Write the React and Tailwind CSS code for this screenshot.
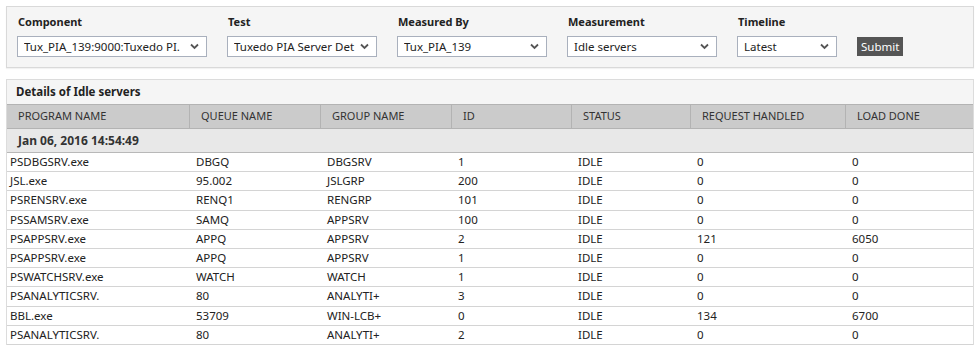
import React from "react";

const filters = [
  { label: "Component", value: "Tux_PIA_139:9000:Tuxedo PI.", width: "w-[190px]" },
  { label: "Test", value: "Tuxedo PIA Server Det", width: "w-[150px]" },
  { label: "Measured By", value: "Tux_PIA_139", width: "w-[150px]" },
  { label: "Measurement", value: "Idle servers", width: "w-[150px]" },
  { label: "Timeline", value: "Latest", width: "w-[100px]" },
];

const columns = [
  "PROGRAM NAME",
  "QUEUE NAME",
  "GROUP NAME",
  "ID",
  "STATUS",
  "REQUEST HANDLED",
  "LOAD DONE",
];

const rows = [
  ["PSDBGSRV.exe", "DBGQ", "DBGSRV", "1", "IDLE", "0", "0"],
  ["JSL.exe", "95.002", "JSLGRP", "200", "IDLE", "0", "0"],
  ["PSRENSRV.exe", "RENQ1", "RENGRP", "101", "IDLE", "0", "0"],
  ["PSSAMSRV.exe", "SAMQ", "APPSRV", "100", "IDLE", "0", "0"],
  ["PSAPPSRV.exe", "APPQ", "APPSRV", "2", "IDLE", "121", "6050"],
  ["PSAPPSRV.exe", "APPQ", "APPSRV", "1", "IDLE", "0", "0"],
  ["PSWATCHSRV.exe", "WATCH", "WATCH", "1", "IDLE", "0", "0"],
  ["PSANALYTICSRV.", "80", "ANALYTI+", "3", "IDLE", "0", "0"],
  ["BBL.exe", "53709", "WIN-LCB+", "0", "IDLE", "134", "6700"],
  ["PSANALYTICSRV.", "80", "ANALYTI+", "2", "IDLE", "0", "0"],
];

const grid = "grid grid-cols-[183px_131px_131px_120px_119px_155px_1fr]";

const Chevron = () => (
  <svg width="9" height="7" viewBox="0 0 9 7" className="shrink-0">
    <path d="M1 1.5 L4.5 5 L8 1.5" fill="none" stroke="#555" strokeWidth="1.8" />
  </svg>
);

const App = () => {
  return (
    <div className="w-[980px] h-[348px] overflow-hidden bg-white px-[6px] pt-[6px] font-['Noto_Sans',sans-serif] text-[12px] text-[#222]">
      {/* filter bar */}
      <div className="h-[62px] border border-[#d9d9d9] bg-[#f5f5f5] flex items-start pl-[10px] pt-[7px] gap-[20px] shadow-[0_1px_1px_rgba(0,0,0,0.05)]">
        {filters.map((f) => (
          <div key={f.label} className="flex flex-col">
            <span className="font-bold text-[11px] leading-[16px] text-[#222] pl-[1px]">{f.label}</span>
            <div className={`${f.width} h-[21px] mt-[6px] bg-white border border-[#a9b0bd] flex items-center pl-[6px] pr-[7px] gap-[5px]`}>
              <span className="flex-1 whitespace-nowrap overflow-hidden text-[11.5px] leading-[18px]">{f.value}</span>
              <Chevron />
            </div>
          </div>
        ))}
        <button className="mt-[23px] h-[19px] px-[4px] bg-[#555] text-white text-[11.5px] leading-[19px]">
          Submit
        </button>
      </div>

      {/* details table */}
      <div className="mt-[11px] border border-[#dcdcdc] border-b-0">
        <div className="h-[24px] bg-[#f5f5f5] flex items-center pl-[9px] font-bold text-[11.5px]">
          Details of Idle servers
        </div>
        <div className={`${grid} h-[25px] bg-[#cbcbcb] border-y border-[#b3b3b3] text-[#333] text-[11px]`}>
          {columns.map((c, i) => (
            <div
              key={c}
              className={`flex items-center pl-[11px] ${i < columns.length - 1 ? "border-r border-[#b3b3b3]" : ""}`}
            >
              {c}
            </div>
          ))}
        </div>
        <div className="h-[24px] bg-[#e8e8e8] border-b border-[#b8b8b8] flex items-center pl-[11px] font-bold text-[#333]">
          Jan 06, 2016 14:54:49
        </div>
        {rows.map((r, ri) => (
          <div key={ri} className={`${grid} h-[19.2px] border-b border-[#d4d4d4] text-[11.5px]`}>
            {r.map((cell, ci) => (
              <div
                key={ci}
                className={`flex items-center whitespace-nowrap leading-[18px] ${ci === 0 ? "pl-[3px]" : "pl-[6px]"}`}
              >
                {cell}
              </div>
            ))}
          </div>
        ))}
      </div>
    </div>
  );
};

export default App;
